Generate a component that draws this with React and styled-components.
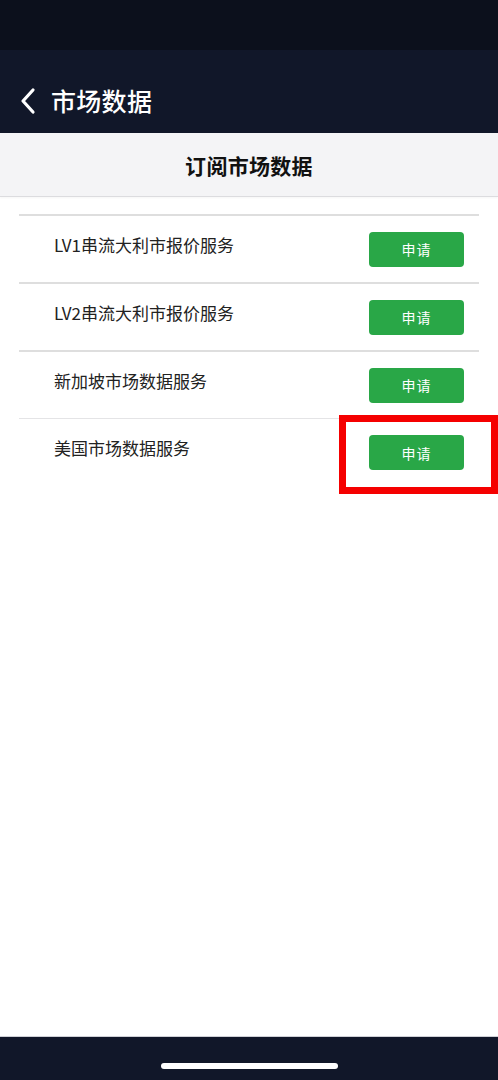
import React from "react";
import styled, { createGlobalStyle } from "styled-components";

const Global = createGlobalStyle`
  html, body { margin: 0; padding: 0; background: #ffffff; }
  body { font-family: "Noto Sans CJK SC", "Noto Sans", sans-serif; }
  * { box-sizing: border-box; }
`;

const Page = styled.div`
  position: relative;
  min-height: 100vh;
  display: flex;
  flex-direction: column;
  background: #ffffff;
`;

const StatusBar = styled.div`
  height: 50px;
  background: #0c101c;
`;

const NavBar = styled.div`
  height: 83px;
  background: #111729;
  display: flex;
  align-items: center;
  padding: 18px 0 0 18px;
  gap: 13px;
`;

const NavTitle = styled.div`
  color: #ffffff;
  font-size: 25px;
  font-weight: 500;
  letter-spacing: 0.3px;
  line-height: 1;
`;

const SubHeader = styled.div`
  height: 64px;
  background: #f4f4f6;
  border-bottom: 1px solid #dcdcdf;
  box-shadow: 0 1px 2px rgba(0, 0, 0, 0.04);
  display: flex;
  align-items: center;
  justify-content: center;
  font-size: 21px;
  font-weight: 700;
  letter-spacing: 0.3px;
  color: #111111;
`;

const Content = styled.div`
  flex: 1;
  padding: 17px 19px 0;
`;

const Row = styled.div`
  display: flex;
  align-items: center;
  justify-content: space-between;
  height: 68px;
  border-top: ${(p) => (p.$light ? "1px solid #e4e4e6" : "2px solid #dedede")};
  padding: 0 15px 0 35px;
`;

const RowLabel = styled.div`
  font-size: 17px;
  color: #222222;
  padding-bottom: 10px;
`;

const ApplyButton = styled.button`
  width: 95px;
  height: 35px;
  border: none;
  border-radius: 4px;
  background: #29a747;
  color: #ffffff;
  font-family: inherit;
  font-size: 14px;
  letter-spacing: 1px;
  padding: 0;
`;

const Highlight = styled.div`
  position: absolute;
  left: 339px;
  top: 415px;
  width: 159px;
  height: 79px;
  border: 7px solid #f50000;
  pointer-events: none;
`;

const BottomBar = styled.div`
  height: 44px;
  background: #111729;
  border-top: 1px solid #cfd0d6;
  display: flex;
  justify-content: center;
  padding-top: 26px;
`;

const HomeIndicator = styled.div`
  width: 177px;
  height: 6px;
  border-radius: 3px;
  background: #ffffff;
`;

const Chevron = () => (
  <svg width="20" height="30" viewBox="0 0 20 30" fill="none">
    <path d="M15 4 L5 15 L15 26" stroke="#ffffff" strokeWidth="3.2" strokeLinecap="round" strokeLinejoin="round" />
  </svg>
);

const services = [
  "LV1串流大利市报价服务",
  "LV2串流大利市报价服务",
  "新加坡市场数据服务",
  "美国市场数据服务",
];

export default function App() {
  return (
    <Page>
      <Global />
      <StatusBar />
      <NavBar>
        <Chevron />
        <NavTitle>市场数据</NavTitle>
      </NavBar>
      <SubHeader>订阅市场数据</SubHeader>
      <Content>
        {services.map((s, i) => (
          <Row key={s} $light={i === services.length - 1}>
            <RowLabel>{s}</RowLabel>
            <ApplyButton>申请</ApplyButton>
          </Row>
        ))}
      </Content>
      <BottomBar>
        <HomeIndicator />
      </BottomBar>
      <Highlight />
    </Page>
  );
}
